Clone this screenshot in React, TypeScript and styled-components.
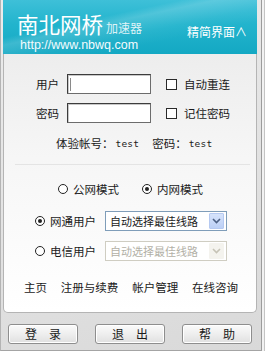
import React from "react";
import styled, { createGlobalStyle } from "styled-components";

const Global = createGlobalStyle`
  html, body { margin: 0; padding: 0; background: #ffffff; }
  body { font-family: "Noto Sans CJK SC", "Noto Sans", sans-serif; }
`;

const CJK = `"Noto Sans CJK SC", "Noto Sans", sans-serif`;

const Page = styled.div`
  width: 269px;
  height: 358px;
  background: #ffffff;
  overflow: hidden;
`;

const Window = styled.div`
  width: 262px;
  height: 351px;
  box-sizing: border-box;
  border-left: 1px solid #b4b4b4;
  border-right: 1px solid #9c9c9c;
  border-bottom: 1px solid #a4a4a4;
  padding: 0 4px 0 2px;
  background: linear-gradient(160deg, #ececec 0%, #e2e2e2 55%, #d9d9d9 100%);
  box-shadow: 2px 0 0 #f2f2f2, 3px 0 0 #c4c4c4;
  display: flex;
  flex-direction: column;
`;

const Header = styled.div`
  height: 54px;
  box-sizing: border-box;
  padding: 10px 10px 0 14px;
  color: #ffffff;
  background:
    linear-gradient(168deg, rgba(255,255,255,0) 35%, rgba(255,255,255,0.16) 42%, rgba(255,255,255,0.04) 58%, rgba(255,255,255,0) 70%),
    linear-gradient(180deg, #3ec0d8 0%, #22b4cd 45%, #14a8c3 100%);
  display: flex;
  justify-content: space-between;
  align-items: flex-start;
`;

const Brand = styled.div`
  display: flex;
  flex-direction: column;
`;

const TitleLine = styled.div`
  display: flex;
  align-items: baseline;
  gap: 3px;
  height: 28px;
`;

const Title = styled.span`
  font-family: ${CJK};
  font-size: 21.5px;
  line-height: 28px;
`;

const Sub = styled.span`
  font-family: ${CJK};
  font-size: 12px;
  line-height: 16px;
  color: #dff3f7;
`;

const Url = styled.div`
  font-family: "Liberation Sans", Arial, sans-serif;
  font-size: 12.5px;
  line-height: 14px;
  margin-left: 3px;
  color: #f4fbfd;
`;

const Toggle = styled.div`
  font-family: ${CJK};
  font-size: 12px;
  line-height: 16px;
  margin-top: 14px;
  color: #ffffff;
`;

const Panel = styled.div`
  height: 259px;
  box-sizing: border-box;
  border: 1px solid #b4b4b4;
  border-top: none;
  border-radius: 0 0 5px 5px;
  background: linear-gradient(180deg, #ededed 0%, #f6f6f6 40%, #ffffff 100%);
  padding-top: 20px;
  display: flex;
  flex-direction: column;
  font-family: ${CJK};
  font-size: 12px;
  color: #1a1a1a;
`;

const FormRows = styled.div`
  display: flex;
  flex-direction: column;
  gap: 9px;
`;

const FormRow = styled.div`
  display: flex;
  align-items: center;
  padding-left: 32px;
  height: 20px;
`;

const Label = styled.span`
  font-size: 11.5px;
  line-height: 16px;
  width: 22px;
  white-space: nowrap;
`;

const Field = styled.div`
  margin-left: 9px;
  width: 84px;
  height: 20px;
  box-sizing: border-box;
  background: #ffffff;
  border: 1px solid #6c6c6c;
  border-top-color: #3c3c3c;
  border-left-color: #3c3c3c;
  box-shadow: inset 1px 1px 0 #c8c8c8;
  display: flex;
  align-items: center;
  padding-left: 2px;
`;

const Caret = styled.span`
  width: 1px;
  height: 13px;
  background: #8a8a8a;
`;

const Check = styled.span`
  margin-left: 15px;
  width: 11px;
  height: 11px;
  box-sizing: border-box;
  border: 1.5px solid #2a2a2a;
  background: #ffffff;
`;

const CheckText = styled.span`
  margin-left: 7px;
  font-size: 11.5px;
  line-height: 16px;
`;

const Info = styled.div`
  margin-top: 12px;
  padding-left: 52px;
  display: flex;
  align-items: center;
  height: 16px;
  font-size: 11.5px;
  white-space: nowrap;
`;

const Mono = styled.span`
  font-family: "DejaVu Sans Mono", "Liberation Mono", monospace;
  font-size: 9.5px;
  letter-spacing: 0.2px;
  margin-left: 2px;
`;

const InfoGap = styled.span`
  display: inline-block;
  width: 13px;
`;

const Divider = styled.div`
  margin: 13px 6px 0 11px;
  height: 1px;
  background: #e4e4e4;
`;

const ModeRow = styled.div`
  margin-top: 16px;
  height: 16px;
  display: flex;
  align-items: center;
  justify-content: center;
  gap: 23px;
  padding-left: 1px;
`;

const RadioItem = styled.span`
  display: inline-flex;
  align-items: center;
  gap: 5px;
  font-size: 11.5px;
  line-height: 16px;
`;

const Radio = styled.span<{ $on?: boolean }>`
  width: 10px;
  height: 10px;
  box-sizing: border-box;
  border-radius: 50%;
  border: 1.5px solid #222;
  background: #fff;
  display: inline-flex;
  align-items: center;
  justify-content: center;
  &::after {
    content: "";
    display: ${(p) => (p.$on ? "block" : "none")};
    width: 4px;
    height: 4px;
    border-radius: 50%;
    background: #222;
  }
`;

const NetRow = styled.div<{ $first?: boolean }>`
  margin-top: ${(p) => (p.$first ? 14 : 10)}px;
  height: 20px;
  display: flex;
  align-items: center;
  padding-left: 31px;
`;

const NetLabel = styled(RadioItem)`
  width: 70px;
`;

const Select = styled.div<{ $disabled?: boolean }>`
  width: 122px;
  height: 20px;
  box-sizing: border-box;
  border: 1px solid ${(p) => (p.$disabled ? "#cfcdc2" : "#7f9db9")};
  background: #ffffff;
  display: flex;
  align-items: center;
  padding: 0 2px 0 4px;
  color: ${(p) => (p.$disabled ? "#b2b0a6" : "#1a1a1a")};
  font-size: 11px;
  line-height: 16px;
`;

const SelectText = styled.span`
  flex: 1;
  white-space: nowrap;
`;

const Arrow = styled.span<{ $disabled?: boolean }>`
  width: 15px;
  height: 16px;
  box-sizing: border-box;
  border-radius: 1px;
  background: ${(p) =>
    p.$disabled ? "#f4f3ee" : "linear-gradient(180deg, #d6e3fb 0%, #bcd0f6 100%)"};
  border: 1px solid ${(p) => (p.$disabled ? "#f4f3ee" : "#b5c9f1")};
  display: flex;
  align-items: center;
  justify-content: center;
  color: ${(p) => (p.$disabled ? "#c6c3b6" : "#4d6185")};
`;

const Links = styled.div`
  margin-top: 18px;
  height: 16px;
  display: flex;
  justify-content: space-between;
  padding: 0 18px 0 20px;
  font-size: 11.5px;
  line-height: 16px;
  white-space: nowrap;
`;

const ButtonBar = styled.div`
  padding: 11px 5px 0 5px;
  display: flex;
  justify-content: space-between;
`;

const Button = styled.div`
  width: 70px;
  height: 20px;
  box-sizing: border-box;
  border: 1px solid #8e8e8e;
  border-radius: 3px;
  background: linear-gradient(180deg, #fbfbfb 0%, #eeeeee 50%, #e0e0e0 100%);
  box-shadow: inset 0 0 0 1px #ffffff;
  display: flex;
  align-items: center;
  justify-content: center;
  gap: 12px;
  font-family: ${CJK};
  font-size: 12px;
  line-height: 16px;
  color: #1a1a1a;
`;

const Chevron = () => (
  <svg width="9" height="6" viewBox="0 0 9 6">
    <path d="M1 1 L4.5 4.5 L8 1" fill="none" stroke="currentColor" strokeWidth="1.6" />
  </svg>
);

export default function App() {
  return (
    <Page>
      <Global />
      <Window>
        <Header>
          <Brand>
            <TitleLine>
              <Title>南北网桥</Title>
              <Sub>加速器</Sub>
            </TitleLine>
            <Url>http://www.nbwq.com</Url>
          </Brand>
          <Toggle>精简界面∧</Toggle>
        </Header>
        <Panel>
          <FormRows>
            <FormRow>
              <Label>用户</Label>
              <Field>
                <Caret />
              </Field>
              <Check />
              <CheckText>自动重连</CheckText>
            </FormRow>
            <FormRow>
              <Label>密码</Label>
              <Field />
              <Check />
              <CheckText>记住密码</CheckText>
            </FormRow>
          </FormRows>
          <Info>
            体验帐号：<Mono>test</Mono>
            <InfoGap />
            密码：<Mono>test</Mono>
          </Info>
          <Divider />
          <ModeRow>
            <RadioItem>
              <Radio />
              公网模式
            </RadioItem>
            <RadioItem>
              <Radio $on />
              内网模式
            </RadioItem>
          </ModeRow>
          <NetRow $first>
            <NetLabel>
              <Radio $on />
              网通用户
            </NetLabel>
            <Select>
              <SelectText>自动选择最佳线路</SelectText>
              <Arrow>
                <Chevron />
              </Arrow>
            </Select>
          </NetRow>
          <NetRow>
            <NetLabel>
              <Radio />
              电信用户
            </NetLabel>
            <Select $disabled>
              <SelectText>自动选择最佳线路</SelectText>
              <Arrow $disabled>
                <Chevron />
              </Arrow>
            </Select>
          </NetRow>
          <Links>
            <span>主页</span>
            <span>注册与续费</span>
            <span>帐户管理</span>
            <span>在线咨询</span>
          </Links>
        </Panel>
        <ButtonBar>
          <Button>
            <span>登</span>
            <span>录</span>
          </Button>
          <Button>
            <span>退</span>
            <span>出</span>
          </Button>
          <Button>
            <span>帮</span>
            <span>助</span>
          </Button>
        </ButtonBar>
      </Window>
    </Page>
  );
}
